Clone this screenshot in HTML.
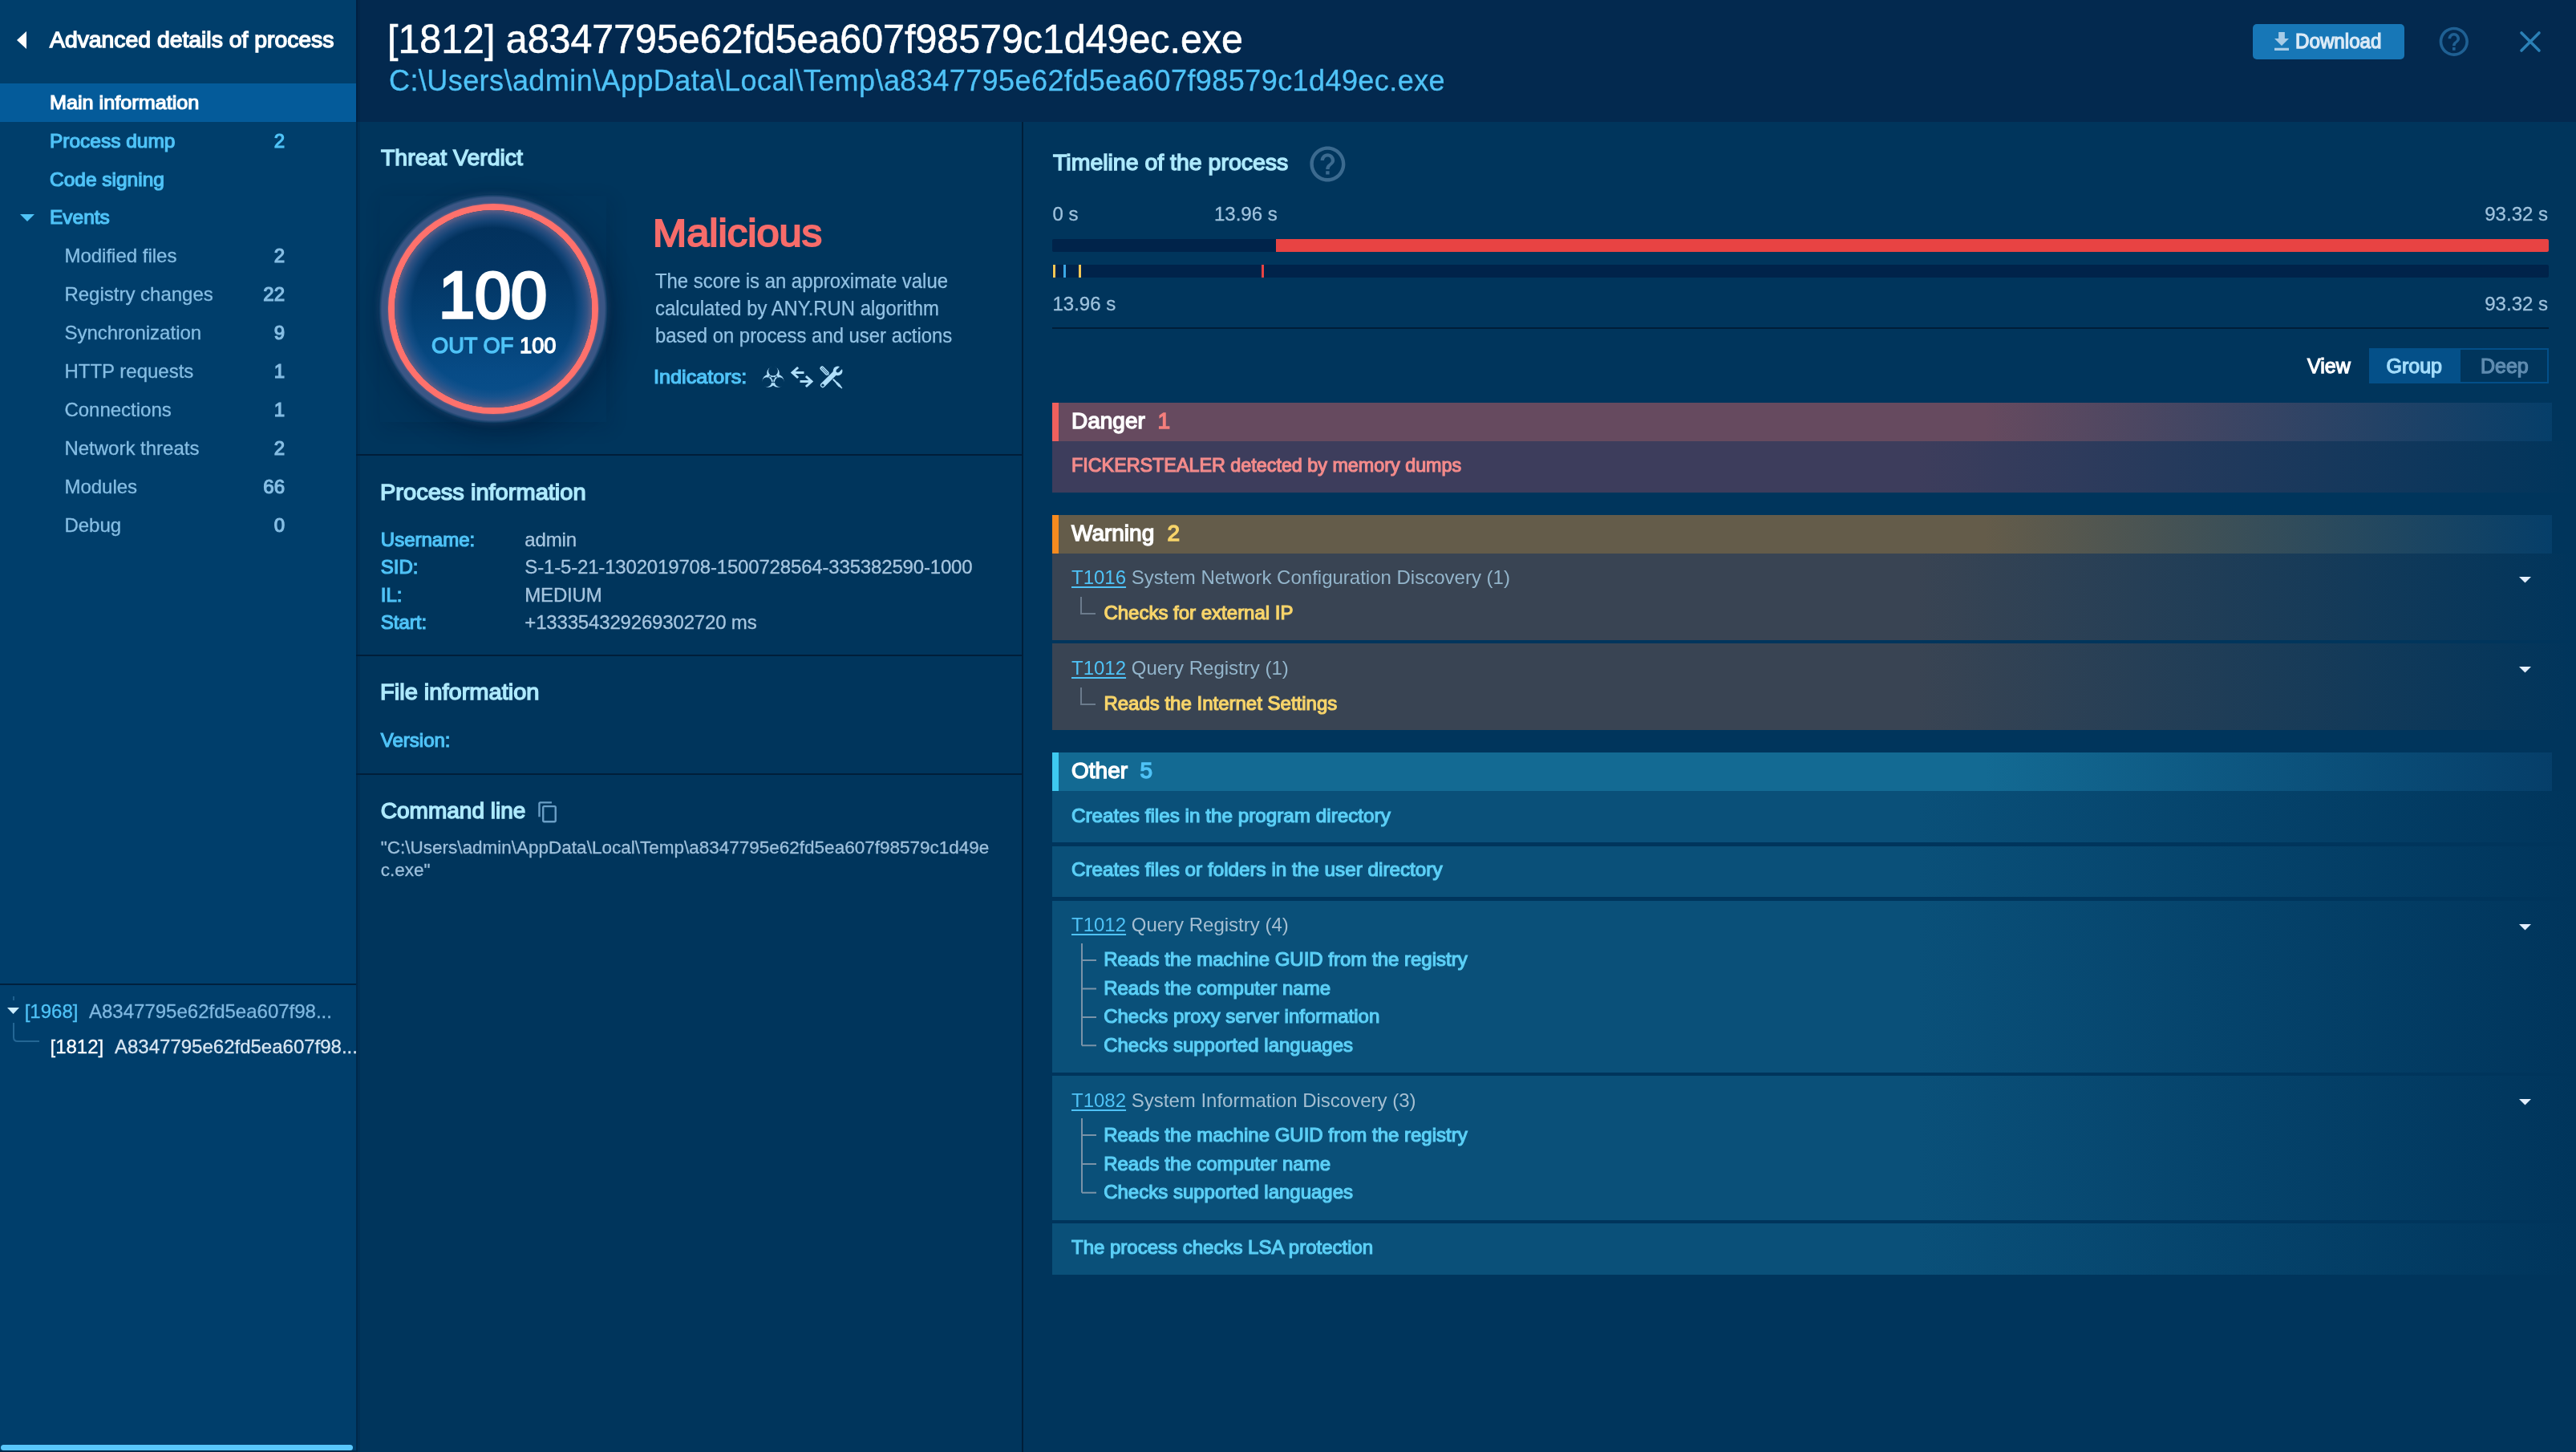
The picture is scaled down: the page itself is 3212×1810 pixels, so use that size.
<!DOCTYPE html><html><head><meta charset="utf-8"><style>
html,body{margin:0;padding:0;width:3212px;height:1810px;overflow:hidden;background:#00355c;font-family:"Liberation Sans",sans-serif;}
.t{position:absolute;line-height:1;white-space:pre;}
.r{position:absolute;}
svg{position:absolute;overflow:visible;}
#w{position:absolute;left:0;top:0;width:3212px;height:1810px;will-change:transform;}
</style></head><body><div id="w">
<div class="r" style="left:444px;top:152px;width:2768px;height:1658px;background:#00355c;"></div>
<div class="r" style="left:444px;top:0px;width:2768px;height:152px;background:#03294f;"></div>
<div class="r" style="left:0px;top:0px;width:444px;height:1810px;background:#003e6b;"></div>
<div class="r" style="left:444px;top:0px;width:2px;height:1810px;background:rgba(0,18,40,0.35);"></div>
<div class="r" style="left:446px;top:0px;width:3px;height:1810px;background:rgba(0,18,40,0.14);"></div>
<svg style="left:21px;top:39px" width="12" height="22"><polygon points="12,0 12,22 0,11" fill="#ffffff"/></svg>
<div class="t " style="left:62px;top:35.70px;font-size:28px;color:#ffffff;-webkit-text-stroke-width:0.3px;-webkit-text-stroke-width:1.4px;transform:scaleX(1.012);transform-origin:left center;">Advanced details of process</div>
<div class="r" style="left:0px;top:104px;width:444px;height:48px;background:#045b9a;"></div>
<div class="t " style="left:62px;top:115.98px;font-size:24px;color:#ffffff;-webkit-text-stroke-width:0.3px;-webkit-text-stroke-width:1.2px;transform:scaleX(1.05);transform-origin:left center;">Main information</div>
<div class="t " style="left:62px;top:163.68px;font-size:24px;color:#4fc3f7;-webkit-text-stroke-width:0.3px;-webkit-text-stroke-width:1.2px;transform:scaleX(1.02);transform-origin:left center;">Process dump</div>
<div class="t " style="right:2857px;top:163.68px;font-size:24px;color:#4fc3f7;-webkit-text-stroke-width:0.3px;-webkit-text-stroke-width:1.2px;transform:scaleX(1.0);transform-origin:right center;">2</div>
<div class="t " style="left:62px;top:211.68px;font-size:24px;color:#4fc3f7;-webkit-text-stroke-width:0.3px;-webkit-text-stroke-width:1.2px;transform:scaleX(1.02);transform-origin:left center;">Code signing</div>
<svg style="left:25px;top:267px" width="18" height="9"><polygon points="0,0 18,0 9,9" fill="#4fc3f7"/></svg>
<div class="t " style="left:62px;top:259.18px;font-size:24px;color:#4fc3f7;-webkit-text-stroke-width:0.3px;-webkit-text-stroke-width:1.2px;transform:scaleX(1.02);transform-origin:left center;">Events</div>
<div class="t " style="left:80.4px;top:307.38px;font-size:24px;color:#86bee4;-webkit-text-stroke-width:0.3px;">Modified files</div>
<div class="t " style="right:2857px;top:307.38px;font-size:24px;color:#86bee4;-webkit-text-stroke-width:0.3px;-webkit-text-stroke-width:1.2px;transform:scaleX(1.0);transform-origin:right center;">2</div>
<div class="t " style="left:80.4px;top:355.38px;font-size:24px;color:#86bee4;-webkit-text-stroke-width:0.3px;">Registry changes</div>
<div class="t " style="right:2857px;top:355.38px;font-size:24px;color:#86bee4;-webkit-text-stroke-width:0.3px;-webkit-text-stroke-width:1.2px;transform:scaleX(1.0);transform-origin:right center;">22</div>
<div class="t " style="left:80.4px;top:403.38px;font-size:24px;color:#86bee4;-webkit-text-stroke-width:0.3px;">Synchronization</div>
<div class="t " style="right:2857px;top:403.38px;font-size:24px;color:#86bee4;-webkit-text-stroke-width:0.3px;-webkit-text-stroke-width:1.2px;transform:scaleX(1.0);transform-origin:right center;">9</div>
<div class="t " style="left:80.4px;top:451.38px;font-size:24px;color:#86bee4;-webkit-text-stroke-width:0.3px;">HTTP requests</div>
<div class="t " style="right:2857px;top:451.38px;font-size:24px;color:#86bee4;-webkit-text-stroke-width:0.3px;-webkit-text-stroke-width:1.2px;transform:scaleX(1.0);transform-origin:right center;">1</div>
<div class="t " style="left:80.4px;top:499.38px;font-size:24px;color:#86bee4;-webkit-text-stroke-width:0.3px;">Connections</div>
<div class="t " style="right:2857px;top:499.38px;font-size:24px;color:#86bee4;-webkit-text-stroke-width:0.3px;-webkit-text-stroke-width:1.2px;transform:scaleX(1.0);transform-origin:right center;">1</div>
<div class="t " style="left:80.4px;top:547.38px;font-size:24px;color:#86bee4;-webkit-text-stroke-width:0.3px;">Network threats</div>
<div class="t " style="right:2857px;top:547.38px;font-size:24px;color:#86bee4;-webkit-text-stroke-width:0.3px;-webkit-text-stroke-width:1.2px;transform:scaleX(1.0);transform-origin:right center;">2</div>
<div class="t " style="left:80.4px;top:595.38px;font-size:24px;color:#86bee4;-webkit-text-stroke-width:0.3px;">Modules</div>
<div class="t " style="right:2857px;top:595.38px;font-size:24px;color:#86bee4;-webkit-text-stroke-width:0.3px;-webkit-text-stroke-width:1.2px;transform:scaleX(1.0);transform-origin:right center;">66</div>
<div class="t " style="left:80.4px;top:643.38px;font-size:24px;color:#86bee4;-webkit-text-stroke-width:0.3px;">Debug</div>
<div class="t " style="right:2857px;top:643.38px;font-size:24px;color:#86bee4;-webkit-text-stroke-width:0.3px;-webkit-text-stroke-width:1.2px;transform:scaleX(1.0);transform-origin:right center;">0</div>
<div class="r" style="left:0px;top:1226px;width:444px;height:2px;background:#00203d;"></div>
<div class="r" style="left:16px;top:1242px;width:2px;height:5px;background:rgba(90,160,210,0.35);"></div>
<svg style="left:9px;top:1256px" width="15" height="8"><polygon points="0,0 15,0 7.5,8" fill="#cdeeff"/></svg>
<div class="t " style="left:30.7px;top:1249.18px;font-size:24px;color:#4fc3f7;-webkit-text-stroke-width:0.3px;">[1968]</div>
<div class="t " style="left:111px;top:1249.18px;font-size:24px;color:#7fb8e0;-webkit-text-stroke-width:0.3px;">A8347795e62fd5ea607f98...</div>
<svg style="left:16px;top:1275px" width="34" height="25"><path d="M1 0 V18 Q1 23 6 23 H33" stroke="rgba(80,150,200,0.45)" stroke-width="2" fill="none"/></svg>
<div class="t " style="left:62.5px;top:1292.68px;font-size:24px;color:#ffffff;-webkit-text-stroke-width:0.3px;">[1812]</div>
<div class="t " style="left:143px;top:1292.68px;font-size:24px;color:#d7e6f2;-webkit-text-stroke-width:0.3px;">A8347795e62fd5ea607f98...</div>
<div class="r" style="left:0px;top:1808px;width:444px;height:2px;background:#012a4c;"></div>
<div class="r" style="left:1px;top:1801px;width:439px;height:7px;background:#58c6fb;border-radius:4px;"></div>
<div class="t " style="left:483px;top:23.67px;font-size:50px;color:#ffffff;-webkit-text-stroke-width:0.3px;transform:scaleX(0.9665);transform-origin:left center;-webkit-text-stroke-width:0.55px;">[1812] a8347795e62fd5ea607f98579c1d49ec.exe</div>
<div class="t " style="left:485px;top:83.33px;font-size:36px;color:#4fc3f7;-webkit-text-stroke-width:0.3px;letter-spacing:0.43px;">C:\Users\admin\AppData\Local\Temp\a8347795e62fd5ea607f98579c1d49ec.exe</div>
<div class="r" style="left:2809px;top:30px;width:189px;height:44px;background:#1777b7;border-radius:5px;"></div>
<svg style="left:2836px;top:40px" width="18" height="23" viewBox="5 3 14 17.5" preserveAspectRatio="none"><path d="M19 9h-4V3H9v6H5l7 7 7-7zM5 18v2.5h14V18H5z" fill="#a8cbe6"/></svg>
<div class="t " style="left:2862px;top:38.84px;font-size:25px;color:#dceaf6;-webkit-text-stroke-width:0.3px;-webkit-text-stroke-width:1.25px;transform:scaleX(0.967);transform-origin:left center;">Download</div>
<svg style="left:3038.2px;top:30.1px" width="43.6" height="43.6" viewBox="0 0 24 24"><path d="M11 18h2v-2h-2v2zm1-16C6.48 2 2 6.48 2 12s4.48 10 10 10 10-4.48 10-10S17.52 2 12 2zm0 18c-4.41 0-8-3.59-8-8s3.59-8 8-8 8 3.59 8 8-3.59 8-8 8zm0-14c-2.21 0-4 1.79-4 4h2c0-1.1.9-2 2-2s2 .9 2 2c0 2-3 1.75-3 5h2c0-2.25 3-2.5 3-5 0-2.21-1.79-4-4-4z" fill="#1f6093"/></svg>
<svg style="left:3142px;top:39px" width="26" height="26"><path d="M2 2L24 24M24 2L2 24" stroke="#2b80b6" stroke-width="3.6" stroke-linecap="round"/></svg>
<div class="r" style="left:1274px;top:152px;width:2px;height:1658px;background:#001e39;"></div>
<div class="r" style="left:444px;top:566px;width:830px;height:2px;background:#001e39;"></div>
<div class="r" style="left:444px;top:816px;width:830px;height:2px;background:#001e39;"></div>
<div class="r" style="left:444px;top:964px;width:830px;height:2px;background:#001e39;"></div>
<div class="t " style="left:474.5px;top:183.30px;font-size:28px;color:#aeeafd;-webkit-text-stroke-width:0.3px;-webkit-text-stroke-width:1.4px;transform:scaleX(1.015);transform-origin:left center;">Threat Verdict</div>
<div class="r" style="left:474px;top:244px;width:282px;height:282px;box-shadow:4px 6px 22px 0px rgba(0,16,42,0.16);"></div>
<div class="r" style="left:474px;top:244px;width:282px;height:282px;background:#00345b;"></div>
<div class="r" style="left:472px;top:242px;width:286px;height:286px;border-radius:50%;background:radial-gradient(circle closest-side, #3b5685 0%, #3b5685 97%, rgba(59,86,133,0) 100%);box-shadow:0 0 6px 1px rgba(59,86,133,0.35), 8px 12px 30px 2px rgba(0,16,42,0.35);"></div>
<div class="r" style="left:484px;top:254px;width:262px;height:262px;border-radius:50%;background:#ff716c;box-shadow:0 0 2px 1px rgba(150,100,130,0.5);"></div>
<div class="r" style="left:492px;top:262px;width:246px;height:246px;border-radius:50%;background:linear-gradient(180deg, #02305a 0%, #033563 30%, #044175 58%, #074b86 82%, #09508c 100%);"></div>
<div class="r" style="left:492px;top:262px;width:246px;height:246px;border-radius:50%;background:radial-gradient(circle closest-side, rgba(40,85,140,0) 82%, rgba(40,88,145,0.45) 89%, rgba(60,88,138,0.8) 95%, #5e5e86 100%);"></div>
<div class="t " style="left:547px;top:327.93px;font-size:81px;color:#ffffff;-webkit-text-stroke-width:0.3px;-webkit-text-stroke-width:3.48px;transform:scaleX(1.0);transform-origin:left center;">100</div>
<div class="t" style="left:538px;top:417.30px;font-size:28px;-webkit-text-stroke-width:1.35px;transform:scaleX(0.973);transform-origin:left center;color:#4fc3f7">OUT OF <span style="color:#fff">100</span></div>
<div class="t " style="left:814px;top:266.97px;font-size:48px;color:#f76c6a;-webkit-text-stroke-width:0.3px;-webkit-text-stroke-width:2.06px;transform:scaleX(1.055);transform-origin:left center;">Malicious</div>
<div class="t " style="left:816.6px;top:338.44px;font-size:25px;color:#92c2e4;-webkit-text-stroke-width:0.3px;transform:scaleX(0.955);transform-origin:left center;-webkit-text-stroke:0.25px #92c2e4;">The score is an approximate value</div>
<div class="t " style="left:816.6px;top:372.14px;font-size:25px;color:#92c2e4;-webkit-text-stroke-width:0.3px;transform:scaleX(0.955);transform-origin:left center;-webkit-text-stroke:0.25px #92c2e4;">calculated by ANY.RUN algorithm</div>
<div class="t " style="left:816.6px;top:405.84px;font-size:25px;color:#92c2e4;-webkit-text-stroke-width:0.3px;transform:scaleX(0.955);transform-origin:left center;-webkit-text-stroke:0.25px #92c2e4;">based on process and user actions</div>
<div class="t " style="left:815px;top:457.68px;font-size:24px;color:#4fc3f7;-webkit-text-stroke-width:0.3px;-webkit-text-stroke-width:1.2px;transform:scaleX(1.05);transform-origin:left center;">Indicators:</div>
<div class="t " style="left:474px;top:599.60px;font-size:28px;color:#aeeafd;-webkit-text-stroke-width:0.3px;-webkit-text-stroke-width:1.4px;transform:scaleX(1.037);transform-origin:left center;">Process information</div>
<div class="t " style="left:474.8px;top:661.38px;font-size:24px;color:#4fc3f7;-webkit-text-stroke-width:0.3px;-webkit-text-stroke-width:1.2px;transform:scaleX(1.0);transform-origin:left center;">Username:</div>
<div class="t " style="left:654.3px;top:661.38px;font-size:24px;color:#a6c6e0;-webkit-text-stroke-width:0.3px;letter-spacing:-0.17px;">admin</div>
<div class="t " style="left:474.8px;top:695.48px;font-size:24px;color:#4fc3f7;-webkit-text-stroke-width:0.3px;-webkit-text-stroke-width:1.2px;transform:scaleX(1.0);transform-origin:left center;">SID:</div>
<div class="t " style="left:654.3px;top:695.48px;font-size:24px;color:#a6c6e0;-webkit-text-stroke-width:0.3px;letter-spacing:-0.17px;">S-1-5-21-1302019708-1500728564-335382590-1000</div>
<div class="t " style="left:474.8px;top:729.58px;font-size:24px;color:#4fc3f7;-webkit-text-stroke-width:0.3px;-webkit-text-stroke-width:1.2px;transform:scaleX(1.0);transform-origin:left center;">IL:</div>
<div class="t " style="left:654.3px;top:729.58px;font-size:24px;color:#a6c6e0;-webkit-text-stroke-width:0.3px;letter-spacing:-0.17px;">MEDIUM</div>
<div class="t " style="left:474.8px;top:763.68px;font-size:24px;color:#4fc3f7;-webkit-text-stroke-width:0.3px;-webkit-text-stroke-width:1.2px;transform:scaleX(1.0);transform-origin:left center;">Start:</div>
<div class="t " style="left:654.3px;top:763.68px;font-size:24px;color:#a6c6e0;-webkit-text-stroke-width:0.3px;letter-spacing:-0.17px;">+133354329269302720 ms</div>
<div class="t " style="left:474px;top:849.30px;font-size:28px;color:#aeeafd;-webkit-text-stroke-width:0.3px;-webkit-text-stroke-width:1.4px;transform:scaleX(1.037);transform-origin:left center;">File information</div>
<div class="t " style="left:474.8px;top:911.28px;font-size:24px;color:#4fc3f7;-webkit-text-stroke-width:0.3px;-webkit-text-stroke-width:1.2px;transform:scaleX(1.0);transform-origin:left center;">Version:</div>
<div class="t " style="left:474.8px;top:997.30px;font-size:28px;color:#aeeafd;-webkit-text-stroke-width:0.3px;-webkit-text-stroke-width:1.4px;transform:scaleX(1.0);transform-origin:left center;">Command line</div>
<svg style="left:670px;top:998px" width="26.4" height="28" viewBox="1 0 22 23.5"><path d="M16 1H4c-1.1 0-2 .9-2 2v14h2V3h12V1zm3 4H8c-1.1 0-2 .9-2 2v14c0 1.1.9 2 2 2h11c1.1 0 2-.9 2-2V7c0-1.1-.9-2-2-2zm0 16H8V7h11v14z" fill="#6b9fc6"/></svg>
<div class="t " style="left:474.8px;top:1046.45px;font-size:22.5px;color:#9dc0dc;-webkit-text-stroke-width:0.3px;">"C:\Users\admin\AppData\Local\Temp\a8347795e62fd5ea607f98579c1d49e</div>
<div class="t " style="left:474.8px;top:1074.45px;font-size:22.5px;color:#9dc0dc;-webkit-text-stroke-width:0.3px;">c.exe"</div>
<svg style="left:949px;top:456px" width="30" height="28" viewBox="0 0 30 28"><defs><mask id="biom" maskUnits="userSpaceOnUse" x="-2" y="-2" width="34" height="34"><circle cx="15.00" cy="9.00" r="7.8" fill="white"/><circle cx="20.72" cy="18.90" r="7.8" fill="white"/><circle cx="9.28" cy="18.90" r="7.8" fill="white"/><circle cx="15.00" cy="6.40" r="6.0" fill="black"/><circle cx="22.97" cy="20.20" r="6.0" fill="black"/><circle cx="7.03" cy="20.20" r="6.0" fill="black"/><circle cx="15" cy="15.6" r="5.3" fill="none" stroke="black" stroke-width="0.9"/><circle cx="15" cy="15.6" r="1.9" fill="black"/><line x1="15.00" y1="15.60" x2="15.00" y2="20.60" stroke="black" stroke-width="0.9"/><line x1="15.00" y1="15.60" x2="10.67" y2="13.10" stroke="black" stroke-width="0.9"/><line x1="15.00" y1="15.60" x2="19.33" y2="13.10" stroke="black" stroke-width="0.9"/></mask></defs><rect x="-2" y="-2" width="34" height="34" fill="#b0dffa" mask="url(#biom)"/></svg>
<svg style="left:986px;top:457px" width="28" height="26" viewBox="0 0 28 26"><g fill="none" stroke="#b0dffa" stroke-width="3" stroke-linecap="square"><path d="M8 2 L2 7.5 L8 13"/><path d="M3 7.5 H15"/><path d="M20 13 L26 18.5 L20 24"/><path d="M13 18.5 H25"/></g></svg>
<svg style="left:1022px;top:456px" width="29" height="29" viewBox="0 0 29 29"><g transform="translate(7 7) rotate(45)"><rect x="-8.2" y="-2.7" width="13.8" height="5.4" rx="2.7" fill="#b0dffa"/><g stroke="#00355c" stroke-width="0.75"><line x1="-6.2" y1="-0.9" x2="4.6" y2="-0.9"/><line x1="-6.2" y1="0.9" x2="4.6" y2="0.9"/></g></g><path d="M10.3 11.7 L11.7 10.3 L22 20.6 L20.6 22Z" fill="#b0dffa"/><path d="M20.1 21.9 L21.9 20.1 L25.2 23 L28.4 27.7 L27.7 28.4 L23 25.2Z" fill="#b0dffa"/><line x1="3.9" y1="24.2" x2="19.5" y2="8.6" stroke="#00355c" stroke-width="7.8" stroke-linecap="round"/><circle cx="22.6" cy="6.4" r="6.7" fill="#00355c"/><line x1="3.9" y1="24.2" x2="19.5" y2="8.6" stroke="#b0dffa" stroke-width="6" stroke-linecap="round"/><circle cx="22.6" cy="6.4" r="5.9" fill="#b0dffa"/><path d="M24.1 7.9 L21.1 4.9 L26.8 -0.8 L29.8 2.2Z" fill="#00355c"/><circle cx="22.6" cy="6.4" r="2.12" fill="#00355c"/><circle cx="3.9" cy="24.2" r="1.6" fill="#00355c"/></svg>
<div class="t " style="left:1312.5px;top:189.20px;font-size:28px;color:#aeeafd;-webkit-text-stroke-width:0.3px;-webkit-text-stroke-width:1.4px;transform:scaleX(1.017);transform-origin:left center;">Timeline of the process</div>
<svg style="left:1628.6px;top:177.5px" width="52.8" height="52.8" viewBox="0 0 24 24"><path d="M11 18h2v-2h-2v2zm1-16C6.48 2 2 6.48 2 12s4.48 10 10 10 10-4.48 10-10S17.52 2 12 2zm0 18c-4.41 0-8-3.59-8-8s3.59-8 8-8 8 3.59 8 8-3.59 8-8 8zm0-14c-2.21 0-4 1.79-4 4h2c0-1.1.9-2 2-2s2 .9 2 2c0 2-3 1.75-3 5h2c0-2.25 3-2.5 3-5 0-2.21-1.79-4-4-4z" fill="#3b6a8f"/></svg>
<div class="t " style="left:1312.5px;top:254.68px;font-size:24px;color:#9ec2dd;-webkit-text-stroke-width:0.3px;">0 s</div>
<div class="t " style="left:1514px;top:254.68px;font-size:24px;color:#9ec2dd;-webkit-text-stroke-width:0.3px;">13.96 s</div>
<div class="t " style="right:35px;top:254.68px;font-size:24px;color:#9ec2dd;-webkit-text-stroke-width:0.3px;">93.32 s</div>
<div class="r" style="left:1312px;top:298px;width:1866px;height:16px;background:#00234a;border-radius:2px;"></div>
<div class="r" style="left:1591px;top:298px;width:1587px;height:16px;background:#e84343;border-radius:0 2px 2px 0;"></div>
<div class="r" style="left:1312px;top:330px;width:1866px;height:16px;background:#00234a;border-radius:2px;"></div>
<div class="r" style="left:1313px;top:330px;width:3px;height:16px;background:#f3c754;"></div>
<div class="r" style="left:1325.5px;top:330px;width:3px;height:16px;background:#3ba7e6;"></div>
<div class="r" style="left:1345px;top:330px;width:3px;height:16px;background:#f3c754;"></div>
<div class="r" style="left:1572.5px;top:330px;width:3px;height:16px;background:#e84343;"></div>
<div class="t " style="left:1312.5px;top:367.18px;font-size:24px;color:#9ec2dd;-webkit-text-stroke-width:0.3px;">13.96 s</div>
<div class="t " style="right:35px;top:367.18px;font-size:24px;color:#9ec2dd;-webkit-text-stroke-width:0.3px;">93.32 s</div>
<div class="r" style="left:1312px;top:408px;width:1866px;height:2px;background:#001e39;"></div>
<div class="t " style="left:2877px;top:443.84px;font-size:25px;color:#ffffff;-webkit-text-stroke-width:0.3px;-webkit-text-stroke-width:1.25px;transform:scaleX(1.0);transform-origin:left center;">View</div>
<div class="r" style="left:2954px;top:434px;width:224px;height:44px;background:transparent;box-sizing:border-box;border:2px solid #034f89;"></div>
<div class="r" style="left:2954px;top:434px;width:114px;height:44px;background:#045089;"></div>
<div class="t " style="left:2975.5px;top:443.84px;font-size:25px;color:#a4ddfb;-webkit-text-stroke-width:0.3px;-webkit-text-stroke-width:1.25px;transform:scaleX(1.0);transform-origin:left center;">Group</div>
<div class="t " style="left:3093px;top:443.84px;font-size:25px;color:#5f8cb0;-webkit-text-stroke-width:0.3px;-webkit-text-stroke-width:1.25px;transform:scaleX(1.0);transform-origin:left center;">Deep</div>
<div class="r" style="left:1312px;top:502px;width:1870px;height:48px;background:linear-gradient(90deg, #664a5f 0%, #664a5f 62.2%, rgba(16,80,130,0.35) 100%);"></div>
<div class="r" style="left:1312px;top:502px;width:8px;height:48px;background:#f0605d;"></div>
<div class="t " style="left:1336px;top:511.30px;font-size:28px;color:#ffffff;-webkit-text-stroke-width:0.3px;-webkit-text-stroke-width:1.4px;transform:scaleX(1.0);transform-origin:left center;">Danger</div>
<div class="t " style="left:1443.6px;top:511.30px;font-size:28px;color:#f47f7d;-webkit-text-stroke-width:0.3px;-webkit-text-stroke-width:1.4px;transform:scaleX(1.0);transform-origin:left center;">1</div>
<div class="r" style="left:1312px;top:550px;width:1900px;height:64px;background:linear-gradient(90deg, #3d3d5c 0%, #3d3d5c 56.8%, rgba(0,53,92,0) 100%);"></div>
<div class="t " style="left:1336px;top:567.98px;font-size:24px;color:#f48b8b;-webkit-text-stroke-width:0.3px;-webkit-text-stroke-width:1.2px;transform:scaleX(0.972);transform-origin:left center;">FICKERSTEALER detected by memory dumps</div>
<div class="r" style="left:1312px;top:642px;width:1870px;height:48px;background:linear-gradient(90deg, #645c4a 0%, #645c4a 62.2%, rgba(16,80,130,0.35) 100%);"></div>
<div class="r" style="left:1312px;top:642px;width:8px;height:48px;background:#f68b1f;"></div>
<div class="t " style="left:1336px;top:651.30px;font-size:28px;color:#ffffff;-webkit-text-stroke-width:0.3px;-webkit-text-stroke-width:1.4px;transform:scaleX(1.0);transform-origin:left center;">Warning</div>
<div class="t " style="left:1455.5px;top:651.30px;font-size:28px;color:#f7d46a;-webkit-text-stroke-width:0.3px;-webkit-text-stroke-width:1.4px;transform:scaleX(1.0);transform-origin:left center;">2</div>
<div class="r" style="left:1312px;top:690px;width:1900px;height:108px;background:linear-gradient(90deg, #394453 0%, #394453 56.8%, rgba(0,53,92,0) 100%);"></div>
<div class="t" style="left:1336px;top:708.08px;font-size:24px;color:#4fc3f7;"><span style="text-decoration:underline;text-underline-offset:3px;text-decoration-thickness:2px">T1016</span> <span style="color:#93b5cb">System Network Configuration Discovery (1)</span></div>
<svg style="left:3140.5px;top:718.6px" width="15" height="7.5"><polygon points="0,0 15,0 7.5,7.5" fill="#e3efff"/></svg>
<svg style="left:1347px;top:744px" width="20" height="22"><path d="M1 0 V21 H19" stroke="#6b7b8c" stroke-width="2" fill="none"/></svg>
<div class="t " style="left:1376.4px;top:752.48px;font-size:24px;color:#f7d46a;-webkit-text-stroke-width:0.3px;-webkit-text-stroke-width:1.2px;transform:scaleX(1.0);transform-origin:left center;">Checks for external IP</div>
<div class="r" style="left:1312px;top:802px;width:1900px;height:108px;background:linear-gradient(90deg, #394453 0%, #394453 56.8%, rgba(0,53,92,0) 100%);"></div>
<div class="t" style="left:1336px;top:820.68px;font-size:24px;color:#4fc3f7;"><span style="text-decoration:underline;text-underline-offset:3px;text-decoration-thickness:2px">T1012</span> <span style="color:#93b5cb">Query Registry (1)</span></div>
<svg style="left:3140.5px;top:831.2px" width="15" height="7.5"><polygon points="0,0 15,0 7.5,7.5" fill="#e3efff"/></svg>
<svg style="left:1347px;top:856.6px" width="20" height="22"><path d="M1 0 V21 H19" stroke="#6b7b8c" stroke-width="2" fill="none"/></svg>
<div class="t " style="left:1376.4px;top:865.08px;font-size:24px;color:#f7d46a;-webkit-text-stroke-width:0.3px;-webkit-text-stroke-width:1.2px;transform:scaleX(1.0);transform-origin:left center;">Reads the Internet Settings</div>
<div class="r" style="left:1312px;top:938px;width:1870px;height:48px;background:linear-gradient(90deg, #136a93 0%, #136a93 62.2%, rgba(16,80,130,0.35) 100%);"></div>
<div class="r" style="left:1312px;top:938px;width:8px;height:48px;background:#3ec9f0;"></div>
<div class="t " style="left:1336px;top:947.30px;font-size:28px;color:#ffffff;-webkit-text-stroke-width:0.3px;-webkit-text-stroke-width:1.4px;transform:scaleX(1.0);transform-origin:left center;">Other</div>
<div class="t " style="left:1421.4px;top:947.30px;font-size:28px;color:#4fc3f7;-webkit-text-stroke-width:0.3px;-webkit-text-stroke-width:1.4px;transform:scaleX(1.0);transform-origin:left center;">5</div>
<div class="r" style="left:1312px;top:986px;width:1900px;height:64px;background:linear-gradient(90deg, #0a5079 0%, #0a5079 56.8%, rgba(0,53,92,0) 100%);"></div>
<div class="t " style="left:1336px;top:1004.68px;font-size:24px;color:#5bcff6;-webkit-text-stroke-width:0.3px;-webkit-text-stroke-width:1.2px;transform:scaleX(1.011);transform-origin:left center;">Creates files in the program directory</div>
<div class="r" style="left:1312px;top:1054.5px;width:1900px;height:63.5px;background:linear-gradient(90deg, #0a5079 0%, #0a5079 56.8%, rgba(0,53,92,0) 100%);"></div>
<div class="t " style="left:1336px;top:1072.48px;font-size:24px;color:#5bcff6;-webkit-text-stroke-width:0.3px;-webkit-text-stroke-width:1.2px;transform:scaleX(1.011);transform-origin:left center;">Creates files or folders in the user directory</div>
<div class="r" style="left:1312px;top:1122.5px;width:1900px;height:214.5px;background:linear-gradient(90deg, #0a5079 0%, #0a5079 56.8%, rgba(0,53,92,0) 100%);"></div>
<div class="t" style="left:1336px;top:1141.18px;font-size:24px;color:#4fc3f7;"><span style="text-decoration:underline;text-underline-offset:3px;text-decoration-thickness:2px">T1012</span> <span style="color:#a5bfd2">Query Registry (4)</span></div>
<svg style="left:3140.5px;top:1151.7px" width="15" height="7.5"><polygon points="0,0 15,0 7.5,7.5" fill="#e3efff"/></svg>
<svg style="left:1348px;top:1175.7px" width="20" height="129"><path d="M1 0 V127.3 M1 21.0 H19 M1 56.4 H19 M1 91.9 H19 M1 127.3 H19" stroke="#7a93a8" stroke-width="2" fill="none"/></svg>
<div class="t " style="left:1376.2px;top:1184.38px;font-size:24px;color:#5bcff6;-webkit-text-stroke-width:0.3px;-webkit-text-stroke-width:1.2px;transform:scaleX(1.0);transform-origin:left center;">Reads the machine GUID from the registry</div>
<div class="t " style="left:1376.2px;top:1219.81px;font-size:24px;color:#5bcff6;-webkit-text-stroke-width:0.3px;-webkit-text-stroke-width:1.2px;transform:scaleX(1.0);transform-origin:left center;">Reads the computer name</div>
<div class="t " style="left:1376.2px;top:1255.24px;font-size:24px;color:#5bcff6;-webkit-text-stroke-width:0.3px;-webkit-text-stroke-width:1.2px;transform:scaleX(1.0);transform-origin:left center;">Checks proxy server information</div>
<div class="t " style="left:1376.2px;top:1290.67px;font-size:24px;color:#5bcff6;-webkit-text-stroke-width:0.3px;-webkit-text-stroke-width:1.2px;transform:scaleX(1.0);transform-origin:left center;">Checks supported languages</div>
<div class="r" style="left:1312px;top:1341px;width:1900px;height:180px;background:linear-gradient(90deg, #0a5079 0%, #0a5079 56.8%, rgba(0,53,92,0) 100%);"></div>
<div class="t" style="left:1336px;top:1359.68px;font-size:24px;color:#4fc3f7;"><span style="text-decoration:underline;text-underline-offset:3px;text-decoration-thickness:2px">T1082</span> <span style="color:#a5bfd2">System Information Discovery (3)</span></div>
<svg style="left:3140.5px;top:1370.2px" width="15" height="7.5"><polygon points="0,0 15,0 7.5,7.5" fill="#e3efff"/></svg>
<svg style="left:1348px;top:1394.0px" width="20" height="94"><path d="M1 0 V92.8 M1 21.0 H19 M1 56.9 H19 M1 92.8 H19" stroke="#7a93a8" stroke-width="2" fill="none"/></svg>
<div class="t " style="left:1376.2px;top:1402.68px;font-size:24px;color:#5bcff6;-webkit-text-stroke-width:0.3px;-webkit-text-stroke-width:1.2px;transform:scaleX(1.0);transform-origin:left center;">Reads the machine GUID from the registry</div>
<div class="t " style="left:1376.2px;top:1438.58px;font-size:24px;color:#5bcff6;-webkit-text-stroke-width:0.3px;-webkit-text-stroke-width:1.2px;transform:scaleX(1.0);transform-origin:left center;">Reads the computer name</div>
<div class="t " style="left:1376.2px;top:1474.48px;font-size:24px;color:#5bcff6;-webkit-text-stroke-width:0.3px;-webkit-text-stroke-width:1.2px;transform:scaleX(1.0);transform-origin:left center;">Checks supported languages</div>
<div class="r" style="left:1312px;top:1525px;width:1900px;height:64px;background:linear-gradient(90deg, #0a5079 0%, #0a5079 56.8%, rgba(0,53,92,0) 100%);"></div>
<div class="t " style="left:1336px;top:1543.38px;font-size:24px;color:#5bcff6;-webkit-text-stroke-width:0.3px;-webkit-text-stroke-width:1.2px;transform:scaleX(1.0);transform-origin:left center;">The process checks LSA protection</div>
</div></body></html>
